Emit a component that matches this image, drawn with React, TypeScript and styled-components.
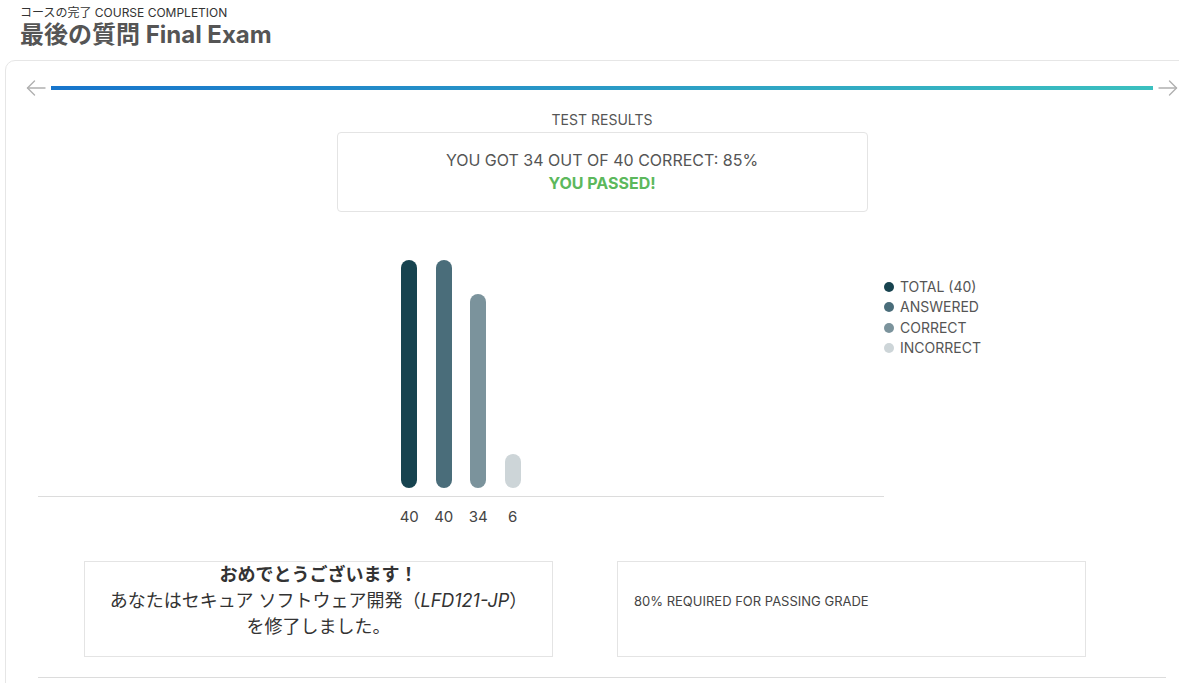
import React from "react";
import styled, { createGlobalStyle } from "styled-components";

const GlobalStyle = createGlobalStyle`
  html, body { margin: 0; padding: 0; background: #fff; overflow: hidden; }
  body {
    font-family: Inter, "Noto Sans CJK JP", "Noto Sans", sans-serif;
    color: #333;
  }
`;

const Page = styled.div`
  width: 1179px;
  height: 683px;
  overflow: hidden;
`;

const Header = styled.header`
  padding: 5px 20px 0 20px;
  height: 60px;
  box-sizing: border-box;
`;

const Eyebrow = styled.div`
  font-size: 12px;
  line-height: 15px;
  color: #333;
`;

const Title = styled.h1`
  margin: 0;
  font-size: 24px;
  line-height: 29px;
  font-weight: 700;
  color: #555;
`;

const Card = styled.section`
  margin-left: 5px;
  width: 1220px;
  border: 1px solid #e6e6e6;
  border-radius: 10px;
  box-sizing: border-box;
  padding-top: 19px;
  height: 700px;
`;

const NavRow = styled.div`
  display: flex;
  align-items: center;
  gap: 5px;
  padding-left: 20px;
  height: 16px;
`;

const ArrowBtn = styled.span`
  width: 20px;
  height: 16px;
  display: flex;
  align-items: center;
  justify-content: center;
`;

const Progress = styled.div`
  width: 1102px;
  height: 4px;
  background: linear-gradient(90deg, #1775cc 0%, #2a9ac6 50%, #3bc0bf 100%);
`;

const Content = styled.div`
  padding: 0 0 0 32px;
  width: 1128px;
`;

const SectionLabel = styled.div`
  margin-top: 16px;
  text-align: center;
  font-size: 14px;
  line-height: 16px;
  color: #555;
`;

const ResultBox = styled.div`
  margin: 4px auto 0;
  width: 531px;
  height: 80px;
  box-sizing: border-box;
  border: 1px solid #e4e4e4;
  border-radius: 4px;
  padding-top: 16px;
  text-align: center;
  font-size: 16px;
  line-height: 23px;
  color: #555;
`;

const Passed = styled.div`
  font-weight: 700;
  color: #5cb85c;
`;

const ChartRow = styled.div`
  display: flex;
  margin-top: 48px;
`;

const ChartArea = styled.div`
  width: 846px;
  display: flex;
  flex-direction: column;
`;

const Plot = styled.div`
  height: 228px;
  display: flex;
  align-items: flex-end;
  justify-content: center;
  gap: 18.5px;
`;

const Bar = styled.div<{ $color: string }>`
  width: 16px;
  border-radius: 8px;
  background: ${(p) => p.$color};
`;

const Baseline = styled.div`
  margin-top: 8px;
  height: 1px;
  background: #dcdcdc;
`;

const Labels = styled.div`
  margin-top: 10px;
  display: flex;
  justify-content: center;
  gap: 18.5px;
`;

const Label = styled.div`
  width: 16px;
  display: flex;
  justify-content: center;
  font-size: 15px;
  line-height: 20px;
  color: #444;
  white-space: nowrap;
`;

const Legend = styled.ul`
  list-style: none;
  margin: 17px 0 0 0;
  padding: 0;
`;

const LegendItem = styled.li`
  display: flex;
  align-items: center;
  gap: 6px;
  font-size: 14px;
  line-height: 20.3px;
  color: #555;
`;

const Dot = styled.span<{ $color: string }>`
  width: 10px;
  height: 10px;
  border-radius: 50%;
  background: ${(p) => p.$color};
`;

const InfoRow = styled.div`
  margin-top: 34px;
  display: flex;
  gap: 64px;
  padding-left: 46px;
`;

const InfoBox = styled.div`
  width: 469px;
  height: 96px;
  box-sizing: border-box;
  border: 1px solid #e4e4e4;
`;

const Congrats = styled(InfoBox)`
  text-align: center;
  font-size: 18px;
  line-height: 26px;
  color: #333;
`;

const CongratsTitle = styled.div`
  font-weight: 700;
`;

const Requirement = styled(InfoBox)`
  padding: 31px 16px 0;
  font-size: 13px;
  line-height: 16px;
  color: #444;
`;

const BottomRule = styled.div`
  margin-top: 20px;
  height: 1px;
  background: #dcdcdc;
`;

const ArrowIcon: React.FC<{ dir: "left" | "right" }> = ({ dir }) => (
  <svg width="20" height="16" viewBox="0 0 20 16" fill="none" stroke="#b0b0b0" strokeWidth="1.4" strokeLinecap="round" strokeLinejoin="round">
    {dir === "left" ? (
      <>
        <path d="M19 8H1.5" />
        <path d="M8.5 1L1.5 8l7 7" />
      </>
    ) : (
      <>
        <path d="M1 8h17.5" />
        <path d="M11.5 1l7 7-7 7" />
      </>
    )}
  </svg>
);

const series = [
  { label: "TOTAL (40)", value: 40, color: "#17434f" },
  { label: "ANSWERED", value: 40, color: "#4a6d7a" },
  { label: "CORRECT", value: 34, color: "#7b939c" },
  { label: "INCORRECT", value: 6, color: "#cdd5d8" },
];

export default function App() {
  return (
    <Page>
      <GlobalStyle />
      <Header>
        <Eyebrow>コースの完了 COURSE COMPLETION</Eyebrow>
        <Title>最後の質問 Final Exam</Title>
      </Header>
      <Card>
        <NavRow>
          <ArrowBtn><ArrowIcon dir="left" /></ArrowBtn>
          <Progress />
          <ArrowBtn><ArrowIcon dir="right" /></ArrowBtn>
        </NavRow>
        <Content>
          <SectionLabel>TEST RESULTS</SectionLabel>
          <ResultBox>
            <div>YOU GOT 34 OUT OF 40 CORRECT: 85%</div>
            <Passed>YOU PASSED!</Passed>
          </ResultBox>
          <ChartRow>
            <ChartArea>
              <Plot>
                {series.map((s) => (
                  <Bar key={s.label} $color={s.color} style={{ height: `${s.value * 5.7}px` }} />
                ))}
              </Plot>
              <Baseline />
              <Labels>
                {series.map((s) => (
                  <Label key={s.label}>{s.value}</Label>
                ))}
              </Labels>
            </ChartArea>
            <Legend>
              {series.map((s) => (
                <LegendItem key={s.label}>
                  <Dot $color={s.color} />
                  {s.label}
                </LegendItem>
              ))}
            </Legend>
          </ChartRow>
          <InfoRow>
            <Congrats>
              <CongratsTitle>おめでとうございます！</CongratsTitle>
              <div>あなたはセキュア ソフトウェア開発（<i>LFD121-JP</i>）</div>
              <div>を修了しました。</div>
            </Congrats>
            <Requirement>80% REQUIRED FOR PASSING GRADE</Requirement>
          </InfoRow>
          <BottomRule />
        </Content>
      </Card>
    </Page>
  );
}
